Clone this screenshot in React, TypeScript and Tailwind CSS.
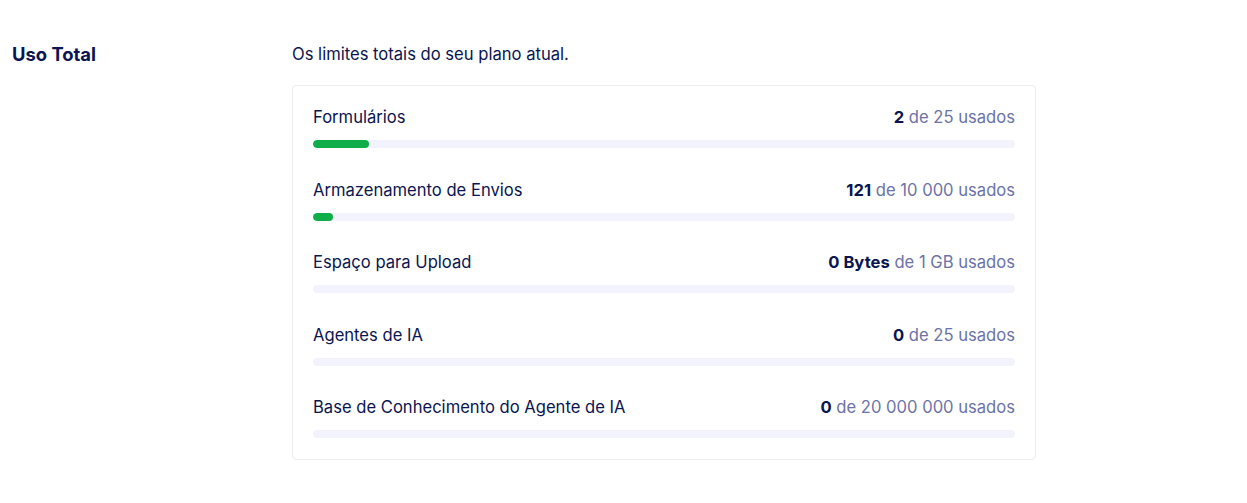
import React from "react";

const rows = [
  { label: "Formulários", used: "2", total: "de 25 usados", pct: 8 },
  { label: "Armazenamento de Envios", used: "121", total: "de 10 000 usados", pct: 1.21 },
  { label: "Espaço para Upload", used: "0 Bytes", total: "de 1 GB usados", pct: 0 },
  { label: "Agentes de IA", used: "0", total: "de 25 usados", pct: 0 },
  { label: "Base de Conhecimento do Agente de IA", used: "0", total: "de 20 000 000 usados", pct: 0 },
];

export default function App() {
  return (
    <div
      className="w-[1247px] h-[503px] bg-white text-[#0a1551]"
      style={{ fontFamily: 'Inter, "Open Sans", sans-serif' }}
    >
      <div className="flex pt-[42px]">
        <div className="w-[292px] pl-3 text-[18.4px] font-bold leading-6">Uso Total</div>
        <div className="w-[744px]">
          <div className="text-[16.6px] leading-6">Os limites totais do seu plano atual.</div>
          <div className="mt-[19px] border border-[#ececf3] rounded px-5 pt-[19px] pb-[21px] flex flex-col gap-[29.5px]">
            {rows.map((r) => (
              <div key={r.label} className="flex flex-col">
                <div className="flex justify-between text-[16.6px] leading-6">
                  <span>{r.label}</span>
                  <span>
                    <span className="font-bold">{r.used}</span>{" "}
                    <span className="text-[#6c73a8]">{r.total}</span>
                  </span>
                </div>
                <div className="mt-[11px] h-2 rounded-full bg-[#f3f3fe] overflow-hidden">
                  {r.pct > 0 && (
                    <div
                      className="h-2 rounded-full bg-[#0fae4a] min-w-[20px]"
                      style={{ width: `${r.pct}%` }}
                    />
                  )}
                </div>
              </div>
            ))}
          </div>
        </div>
      </div>
    </div>
  );
}
